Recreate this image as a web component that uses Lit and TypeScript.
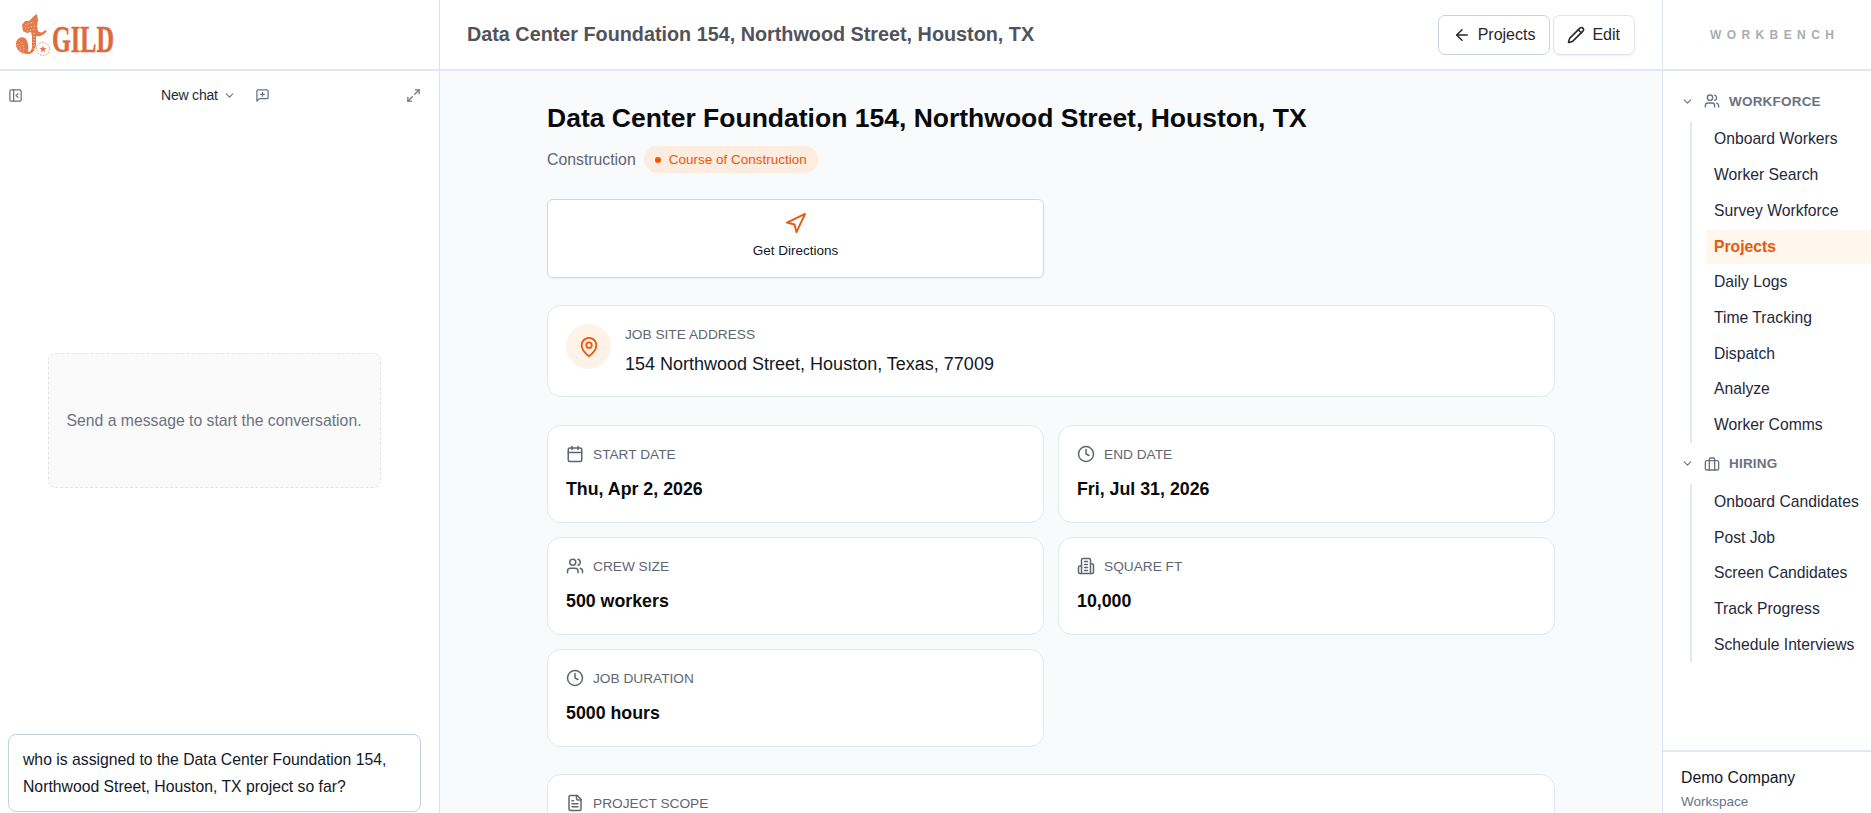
import { LitElement, html, svg, css } from 'lit';
import { customElement } from 'lit/decorators.js';

const ICONS: Record<string, unknown> = {
  panel: svg`<rect x="3" y="3" width="18" height="18" rx="2"/><path d="M9 3v18"/><path d="m16 15-3-3 3-3"/>`,
  chevron: svg`<path d="m6 9 6 6 6-6"/>`,
  chat: svg`<path d="M21 15a2 2 0 0 1-2 2H7l-4 4V5a2 2 0 0 1 2-2h14a2 2 0 0 1 2 2z"/><path d="M12 7v6"/><path d="M9 10h6"/>`,
  expand: svg`<path d="M15 3h6v6"/><path d="m21 3-7 7"/><path d="m3 21 7-7"/><path d="M9 21H3v-6"/>`,
  back: svg`<path d="m12 19-7-7 7-7"/><path d="M19 12H5"/>`,
  pencil: svg`<path d="M21.174 6.812a1 1 0 0 0-3.986-3.987L3.842 16.174a2 2 0 0 0-.5.83l-1.321 4.352a.5.5 0 0 0 .623.622l4.353-1.32a2 2 0 0 0 .83-.497z"/><path d="m15 5 4 4"/>`,
  users: svg`<path d="M16 21v-2a4 4 0 0 0-4-4H6a4 4 0 0 0-4 4v2"/><circle cx="9" cy="7" r="4"/><path d="M22 21v-2a4 4 0 0 0-3-3.87"/><path d="M16 3.13a4 4 0 0 1 0 7.75"/>`,
  briefcase: svg`<rect x="2" y="7" width="20" height="14" rx="2"/><path d="M16 21V5a2 2 0 0 0-2-2h-4a2 2 0 0 0-2 2v16"/>`,
  nav: svg`<polygon points="3 11 22 2 13 21 11 13 3 11"/>`,
  pin: svg`<path d="M20 10c0 6-8 12-8 12s-8-6-8-12a8 8 0 0 1 16 0Z"/><circle cx="12" cy="10" r="3"/>`,
  calendar: svg`<path d="M8 2v4"/><path d="M16 2v4"/><rect x="3" y="4" width="18" height="18" rx="2"/><path d="M3 10h18"/>`,
  clock: svg`<circle cx="12" cy="12" r="10"/><polyline points="12 6 12 12 16 14"/>`,
  building: svg`<path d="M6 22V4a2 2 0 0 1 2-2h8a2 2 0 0 1 2 2v18Z"/><path d="M6 12H4a2 2 0 0 0-2 2v6a2 2 0 0 0 2 2h2"/><path d="M18 9h2a2 2 0 0 1 2 2v9a2 2 0 0 1-2 2h-2"/><path d="M10 6h4"/><path d="M10 10h4"/><path d="M10 14h4"/><path d="M10 18h4"/>`,
  file: svg`<path d="M15 2H6a2 2 0 0 0-2 2v16a2 2 0 0 0 2 2h12a2 2 0 0 0 2-2V7Z"/><path d="M14 2v4a2 2 0 0 0 2 2h4"/><path d="M10 9H8"/><path d="M16 13H8"/><path d="M16 17H8"/>`,
};

const icon = (name: string, size: number, cls = '') => html`
  <svg class="icon ${cls}" width=${size} height=${size} viewBox="0 0 24 24" fill="none" stroke="currentColor"
    stroke-width="2" stroke-linecap="round" stroke-linejoin="round">${ICONS[name]}</svg>`;

const FACTS = [
  { icon: 'calendar', label: 'Start Date', value: 'Thu, Apr 2, 2026' },
  { icon: 'clock', label: 'End Date', value: 'Fri, Jul 31, 2026' },
  { icon: 'users', label: 'Crew Size', value: '500 workers' },
  { icon: 'building', label: 'Square Ft', value: '10,000' },
  { icon: 'clock', label: 'Job Duration', value: '5000 hours' },
];

const NAV = [
  {
    icon: 'users',
    label: 'Workforce',
    items: ['Onboard Workers', 'Worker Search', 'Survey Workforce', 'Projects', 'Daily Logs', 'Time Tracking', 'Dispatch', 'Analyze', 'Worker Comms'],
  },
  {
    icon: 'briefcase',
    label: 'Hiring',
    items: ['Onboard Candidates', 'Post Job', 'Screen Candidates', 'Track Progress', 'Schedule Interviews'],
  },
];

const TITLE = 'Data Center Foundation 154, Northwood Street, Houston, TX';

@customElement('app-root')
export class AppRoot extends LitElement {
  static styles = css`
    :host {
      display: grid;
      grid-template-columns: 440px 1222px 209px;
      height: 813px;
      overflow: hidden;
      background: #fff;
      color: #0a0a0a;
      font-family: 'Liberation Sans', Arial, sans-serif;
    }
    .icon { display: block; flex: none; }
    .col { display: flex; flex-direction: column; height: 813px; min-height: 0; overflow: hidden; }
    .topbar {
      flex: none;
      height: 71px;
      box-sizing: border-box;
      border-bottom: 2px solid #e2e8f0;
      display: flex;
      align-items: center;
    }

    /* chat */
    .chat { border-right: 1px solid #dbe3ec; }
    .logo { display: block; }
    .toolbar { flex: none; height: 48px; display: flex; align-items: center; padding: 0 18px 0 8px; color: #6b7280; }
    .new-chat { display: flex; align-items: center; gap: 5px; margin-left: 138px; font-size: 14px; color: #1e293b; letter-spacing: -0.2px; }
    .new-chat .icon { color: #6b7280; }
    .toolbar .add { margin-left: 19px; }
    .toolbar .grow { flex: 1; }
    .messages { flex: 1; display: flex; align-items: flex-start; justify-content: center; padding-top: 234px; min-height: 0; }
    .empty {
      width: 333px;
      height: 135px;
      box-sizing: border-box;
      border: 1px dashed #e3e5e8;
      border-radius: 8px;
      background: #fafafa;
      color: #6b7280;
      font-size: 15.75px;
      display: flex;
      align-items: center;
      justify-content: center;
      margin-left: -11px;
    }
    .composer {
      flex: none;
      margin: 0 18px 1px 8px;
      height: 78px;
      box-sizing: border-box;
      border: 1px solid #c3d2e0;
      border-radius: 8px;
      padding: 11px 14px;
      font-size: 15.75px;
      line-height: 27px;
      color: #111827;
    }

    /* main */
    .main { background: #f8fafc; }
    .main .topbar { background: #fff; padding: 0 27px; }
    .page-title { flex: 1; margin: 0; font-size: 19.8px; font-weight: 700; color: #52525b; }
    .btn {
      display: flex;
      align-items: center;
      gap: 7px;
      height: 40px;
      box-sizing: border-box;
      padding: 0 14px;
      background: #fff;
      border: 1px solid #c6d3df;
      border-radius: 7px;
      font-size: 16px;
      color: #27272a;
    }
    .btn.ghost { border-color: #dfe4ea; margin-left: 3px; padding-left: 13px; box-shadow: 0 1px 2px rgba(15, 23, 42, 0.06); }
    .body { width: 1008px; margin: 0 auto; padding-top: 30px; }
    h1 { margin: 0; font-size: 26.5px; line-height: 34px; font-weight: 700; color: #0a0a0a; }
    .meta { display: flex; align-items: center; gap: 8px; margin-top: 11px; color: #5f6672; font-size: 15.8px; }
    .badge {
      display: flex;
      align-items: center;
      gap: 8px;
      height: 27px;
      padding: 0 11px;
      border-radius: 14px;
      background: #fdece0;
      color: #ea580c;
      font-size: 13.5px;
    }
    .dot { width: 6px; height: 6px; border-radius: 50%; background: #ea580c; }
    .directions {
      width: 497px;
      height: 79px;
      box-sizing: border-box;
      margin-top: 26px;
      padding-bottom: 8px;
      background: #fff;
      border: 1px solid #d4d8de;
      border-radius: 6px;
      box-shadow: 0 1px 2px rgba(15, 23, 42, 0.05);
      display: flex;
      flex-direction: column;
      align-items: center;
      justify-content: center;
      gap: 8px;
      font-size: 13.5px;
      color: #111827;
    }
    .directions .icon { color: #ea580c; }
    .card {
      background: #fff;
      border: 1px solid #e2e8f0;
      border-radius: 14px;
      box-sizing: border-box;
    }
    .address { margin-top: 27px; height: 92px; display: flex; align-items: center; gap: 14px; padding: 0 18px; }
    .pin-wrap {
      width: 45px;
      height: 45px;
      border-radius: 50%;
      background: #fff3e8;
      color: #ea580c;
      display: flex;
      align-items: center;
      justify-content: center;
      flex: none;
      margin-bottom: 9px;
    }
    .label { font-size: 13.7px; text-transform: uppercase; color: #5f6672; }
    .address-text { margin-top: 12px; font-size: 18px; color: #111827; }
    .address-copy { margin-bottom: 1px; }
    .facts { margin-top: 28px; display: grid; grid-template-columns: 497px 497px; gap: 14px; }
    .fact { height: 98px; padding: 19px 18px; }
    .fact-head { display: flex; align-items: center; gap: 9px; height: 18px; color: #5f6672; }
    .fact-value { margin-top: 16px; font-size: 17.8px; font-weight: 700; color: #0a0a0a; }
    .scope { margin-top: 27px; height: 200px; padding: 19px 18px; }

    /* workbench */
    .bench { border-left: 1px solid #dbe3ec; box-sizing: border-box; }
    .bench .topbar { padding-left: 47px; font-size: 12px; font-weight: 700; letter-spacing: 5.4px; color: #a8adb3; }
    .groups { flex: 1; padding-top: 19px; min-height: 0; }
    .group-head {
      display: flex;
      align-items: center;
      height: 22px;
      padding-left: 18px;
      color: #6b7280;
      font-size: 13.5px;
      font-weight: 700;
      text-transform: uppercase;
      letter-spacing: 0.2px;
    }
    .group-head .users { margin: 0 9px 0 10px; }
    .items { list-style: none; margin: 9.5px 0 9.5px 27px; padding: 0 0 0 14px; border-left: 2px solid #e2e8f0; }
    .items li { height: 35.7px; display: flex; align-items: center; padding-left: 8px; font-size: 15.7px; color: #1e293b; white-space: nowrap; }
    .items li.on { height: 34px; margin: 1px 0; background: #fff6ec; color: #ea580c; font-weight: 700; }
    .account { flex: none; height: 63px; border-top: 2px solid #e2e8f0; padding: 17px 0 0 18px; box-sizing: border-box; }
    .company { font-size: 15.8px; color: #111827; }
    .workspace { margin-top: 7px; font-size: 13.5px; color: #64748b; }
  `;

  render() {
    return html`
      <section class="col chat">
        <div class="topbar">
          <svg class="logo" width="170" height="70" viewBox="0 0 170 70">
            <!-- mascot, speckled like the original bitmap -->
            <g fill="#e27a4c">
              <path d="M37 14 34 16 29 21 25 21 22 25 23 31 27 33 31 32 32 36 32 46C32 50 30 52 28 52 29 47 28 41 25 38 21 36 16 39 16 44 16 50 21 54 28 54 33 54 36 49 36 44L36 36C40 37 44 35 47 31L45 30C43 33 40 33 38 31L37 26 38 20Z"/>
              <polygon points="43 45.5 44 48 46.5 48 44.5 49.7 45.3 52.3 43 50.8 40.7 52.3 41.5 49.7 39.5 48 42 48"/>
            </g>
            <g fill="none" stroke="#fff" stroke-width="0.7" stroke-dasharray="1.2 1.8">
              <path d="M19 41C23 43 25 48 23 52"/>
              <path d="M17 44C20 46 21 49 20 52"/>
              <path d="M25 25 34 22"/>
              <path d="M25 28 35 26"/>
              <path d="M27 31 36 29"/>
              <path d="M34 33V50"/>
            </g>
            <circle cx="43" cy="49" r="6.5" fill="none" stroke="#e27a4c" stroke-width="1" stroke-dasharray="1.3 1.6"/>
            <text x="52" y="52" font-family="'Liberation Serif', serif" font-weight="700" font-size="38" fill="#e0693a"
              stroke="#e0693a" stroke-width="0.5" textLength="62" lengthAdjust="spacingAndGlyphs">GILD</text>
          </svg>
        </div>
        <div class="toolbar">
          ${icon('panel', 15)}
          <div class="new-chat">New chat ${icon('chevron', 13)}</div>
          <span class="add">${icon('chat', 15)}</span>
          <span class="grow"></span>
          ${icon('expand', 15)}
        </div>
        <div class="messages"><div class="empty">Send a message to start the conversation.</div></div>
        <div class="composer">who is assigned to the Data Center Foundation 154, Northwood Street, Houston, TX project so far?</div>
      </section>

      <section class="col main">
        <div class="topbar">
          <h2 class="page-title">${TITLE}</h2>
          <div class="btn">${icon('back', 18)}Projects</div>
          <div class="btn ghost">${icon('pencil', 18)}Edit</div>
        </div>
        <div class="body">
          <h1>${TITLE}</h1>
          <div class="meta">Construction <span class="badge"><span class="dot"></span>Course of Construction</span></div>
          <div class="directions">${icon('nav', 23)}Get Directions</div>
          <div class="card address">
            <div class="pin-wrap">${icon('pin', 22)}</div>
            <div class="address-copy">
              <div class="label">Job Site Address</div>
              <div class="address-text">154 Northwood Street, Houston, Texas, 77009</div>
            </div>
          </div>
          <div class="facts">
            ${FACTS.map(f => html`
              <div class="card fact">
                <div class="fact-head">${icon(f.icon, 18)}<span class="label">${f.label}</span></div>
                <div class="fact-value">${f.value}</div>
              </div>`)}
          </div>
          <div class="card scope">
            <div class="fact-head">${icon('file', 18)}<span class="label">Project Scope</span></div>
          </div>
        </div>
      </section>

      <aside class="col bench">
        <div class="topbar">WORKBENCH</div>
        <div class="groups">
          ${NAV.map(g => html`
            <div class="group-head">
              ${icon('chevron', 13)}
              <span class="users">${icon(g.icon, 16)}</span>
              ${g.label}
            </div>
            <ul class="items">
              ${g.items.map(item => html`<li class=${item === 'Projects' ? 'on' : ''}>${item}</li>`)}
            </ul>`)}
        </div>
        <div class="account">
          <div class="company">Demo Company</div>
          <div class="workspace">Workspace</div>
        </div>
      </aside>
    `;
  }
}
